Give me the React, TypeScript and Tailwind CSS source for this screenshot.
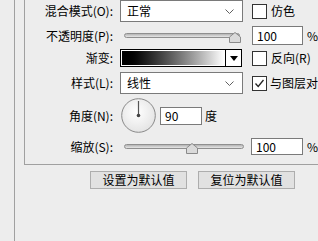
import React from "react";

const Label = ({ text }: { text: string }) => (
  <div className="w-[88px] shrink-0 text-right">{text}</div>
);

const Chevron = () => (
  <svg width="9" height="5" viewBox="0 0 9 5" fill="none">
    <path d="M0.5 0.5L4.5 4.5L8.5 0.5" stroke="#606060" strokeWidth="1" />
  </svg>
);

const Select = ({ value }: { value: string }) => (
  <div className="ml-[7px] w-[123px] h-[22px] shrink-0 flex items-center justify-between border border-[#7a7a7a] bg-white pl-[6px] pr-[8px]">
    <span>{value}</span>
    <Chevron />
  </div>
);

const Checkbox = ({ checked, className }: { checked?: boolean; className?: string }) => (
  <div
    className={`w-[15px] h-[15px] shrink-0 border border-[#333] bg-white flex items-center justify-center ${className ?? ""}`}
  >
    {checked && (
      <svg width="11" height="11" viewBox="0 0 11 11" fill="none">
        <path d="M1.5 5.5L4.2 8.5L9.5 2" stroke="#222" strokeWidth="1.3" />
      </svg>
    )}
  </div>
);

const NumInput = ({ value, className }: { value: string; className: string }) => (
  <div className={`shrink-0 border border-[#7a7a7a] bg-white flex items-center pl-[4px] ${className}`}>
    {value}
  </div>
);

const Thumb = ({ left }: { left: number }) => (
  <svg
    width="12"
    height="11"
    viewBox="0 0 12 11"
    className="absolute top-[-1px]"
    style={{ left }}
  >
    <path
      d="M0.5 10.5V5L6 0.5L11.5 5V10.5Z"
      fill="#dadada"
      stroke="#8a8a8a"
      strokeWidth="1"
    />
  </svg>
);

const Slider = ({ width, thumb }: { width: number; thumb: number }) => (
  <div className="relative h-[5px]" style={{ width }}>
    <div className="h-[5px] w-full rounded-full border border-[#8f8f8f] bg-gradient-to-b from-[#b4b4b4] to-[#e6e6e6]" />
    <Thumb left={thumb} />
  </div>
);

const Dial = () => (
  <svg width="35" height="35" viewBox="0 0 35 35" className="ml-[1px] shrink-0">
    <defs>
      <radialGradient id="dialfill" cx="0.45" cy="0.4" r="0.65">
        <stop offset="0" stopColor="#ffffff" />
        <stop offset="1" stopColor="#e2e2e2" />
      </radialGradient>
    </defs>
    <circle cx="17.5" cy="17.5" r="16.8" fill="url(#dialfill)" stroke="#8a8a8a" strokeWidth="1" />
    <line x1="17.5" y1="3" x2="17.5" y2="17" stroke="#555" strokeWidth="1.2" />
    <circle cx="17.5" cy="17.5" r="1.8" fill="#444" />
  </svg>
);

export default function App() {
  return (
    <div className="w-[318px] h-[241px] overflow-hidden bg-[#ededed] text-[12px] leading-none text-black font-['Noto_Sans_CJK_SC',sans-serif] whitespace-nowrap">
      <div className="ml-[14px] h-full border-l border-[#a0a0a0] pl-[9px]">
        <div className="w-[400px] border-l border-b border-[#a0a0a0] pb-[9px]">
          {/* 混合模式 */}
          <div className="flex items-center h-[22px]">
            <Label text="混合模式(O):" />
            <Select value="正常" />
            <Checkbox className="ml-[9px]" />
            <span className="ml-[4px]">仿色</span>
          </div>

          {/* 不透明度 */}
          <div className="flex items-center h-[19px] mt-[4px]">
            <Label text="不透明度(P):" />
            <div className="ml-[7px] w-[123px] shrink-0 pl-[4px]">
              <Slider width={116} thumb={105} />
            </div>
            <NumInput value="100" className="ml-[9px] w-[51px] h-[19px]" />
            <span className="ml-[4px]">%</span>
          </div>

          {/* 渐变 */}
          <div className="flex items-center h-[18px] mt-[4px]">
            <Label text="渐变:" />
            <div className="ml-[7px] w-[122px] h-[18px] shrink-0 flex border border-black bg-white">
              <div className="flex-1 border border-white bg-gradient-to-r from-black to-white" />
              <div className="w-[16px] border-l border-black flex items-center justify-center">
                <svg width="8" height="5" viewBox="0 0 8 5">
                  <path d="M0 0H8L4 5Z" fill="#000" />
                </svg>
              </div>
            </div>
            <Checkbox className="ml-[10px]" />
            <span className="ml-[4px]">反向(R)</span>
          </div>

          {/* 样式 */}
          <div className="flex items-center h-[22px] mt-[5px]">
            <Label text="样式(L):" />
            <Select value="线性" />
            <Checkbox checked className="ml-[9px]" />
            <span className="ml-[3px]">与图层对齐</span>
          </div>

          {/* 角度 */}
          <div className="flex items-center h-[35px] mt-[4px]">
            <Label text="角度(N):" />
            <div className="ml-[7px] flex items-center">
              <Dial />
              <NumInput value="90" className="ml-[4px] w-[42px] h-[18px]" />
              <span className="ml-[3px]">度</span>
            </div>
          </div>

          {/* 缩放 */}
          <div className="flex items-center h-[17px] mt-[5px]">
            <Label text="缩放(S):" />
            <div className="ml-[7px] w-[124px] shrink-0 pl-[4px]">
              <Slider width={120} thumb={62} />
            </div>
            <NumInput value="100" className="ml-[7px] w-[52px] h-[17px]" />
            <span className="ml-[4px]">%</span>
          </div>
        </div>

        <div className="flex gap-[11px] mt-[6px] ml-[66px]">
          <button className="w-[97px] h-[18px] border border-[#adadad] bg-[#e1e1e1] flex items-center justify-center">
            设置为默认值
          </button>
          <button className="w-[97px] h-[18px] border border-[#adadad] bg-[#e1e1e1] flex items-center justify-center">
            复位为默认值
          </button>
        </div>
      </div>
    </div>
  );
}
